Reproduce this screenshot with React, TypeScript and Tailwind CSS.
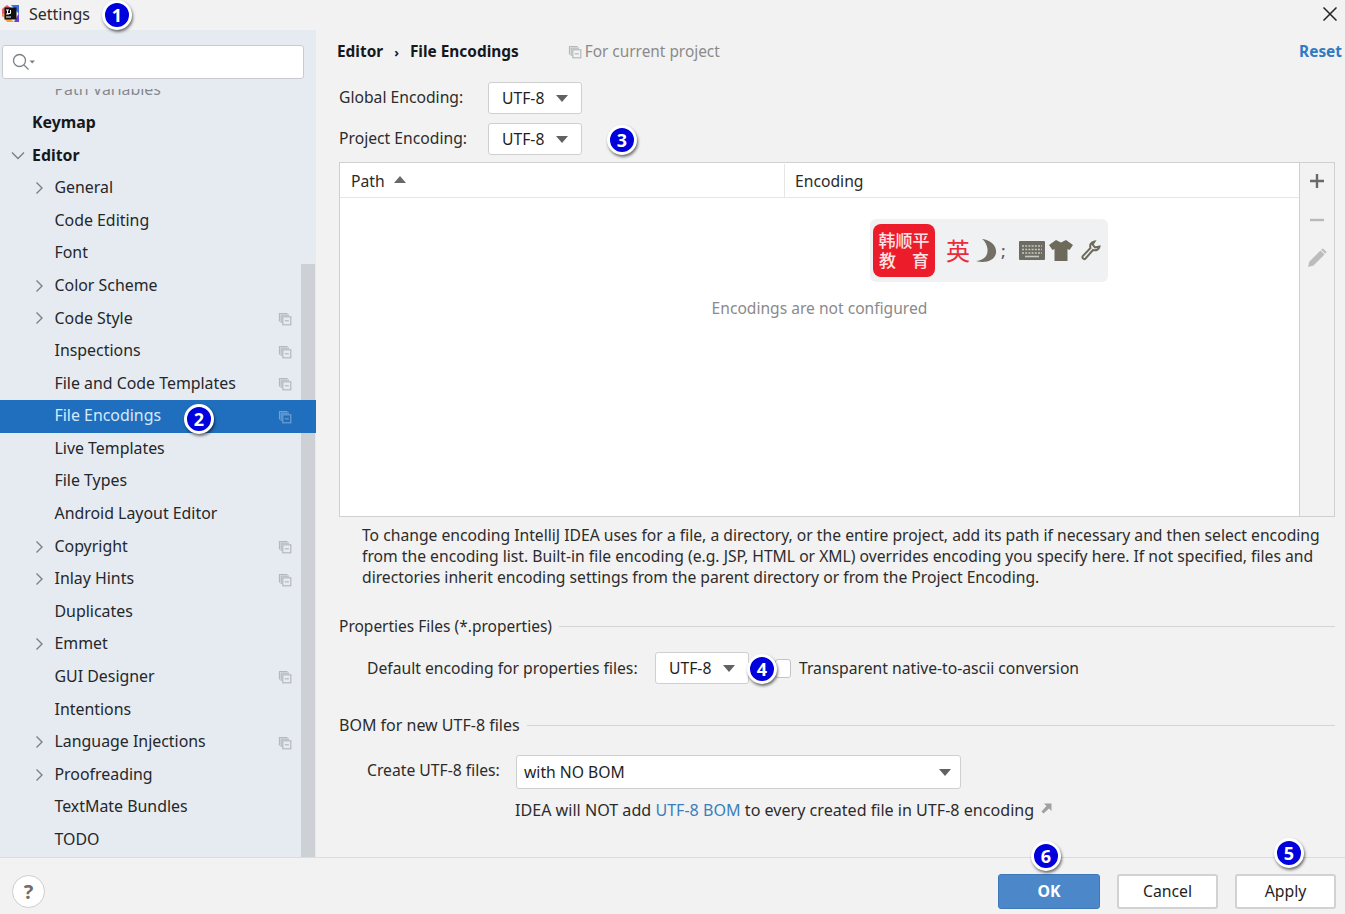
const font = { fontFamily: '"Noto Sans", "Noto Sans CJK SC", sans-serif' };

type Item = {
  label: string;
  level: 0 | 1;
  arrow?: 'right' | 'down';
  bold?: boolean;
  project?: boolean;
  selected?: boolean;
  faded?: boolean;
};

const items: Item[] = [
  { label: 'Path Variables', level: 1, faded: true },
  { label: 'Keymap', level: 0, bold: true },
  { label: 'Editor', level: 0, bold: true, arrow: 'down' },
  { label: 'General', level: 1, arrow: 'right' },
  { label: 'Code Editing', level: 1 },
  { label: 'Font', level: 1 },
  { label: 'Color Scheme', level: 1, arrow: 'right' },
  { label: 'Code Style', level: 1, arrow: 'right', project: true },
  { label: 'Inspections', level: 1, project: true },
  { label: 'File and Code Templates', level: 1, project: true },
  { label: 'File Encodings', level: 1, project: true, selected: true },
  { label: 'Live Templates', level: 1 },
  { label: 'File Types', level: 1 },
  { label: 'Android Layout Editor', level: 1 },
  { label: 'Copyright', level: 1, arrow: 'right', project: true },
  { label: 'Inlay Hints', level: 1, arrow: 'right', project: true },
  { label: 'Duplicates', level: 1 },
  { label: 'Emmet', level: 1, arrow: 'right' },
  { label: 'GUI Designer', level: 1, project: true },
  { label: 'Intentions', level: 1 },
  { label: 'Language Injections', level: 1, arrow: 'right', project: true },
  { label: 'Proofreading', level: 1, arrow: 'right' },
  { label: 'TextMate Bundles', level: 1 },
  { label: 'TODO', level: 1 },
];

function ProjectIcon({ color = '#b4b8bc' }: { color?: string }) {
  return (
    <svg width="14" height="14" viewBox="0 0 14 14" fill="none" stroke={color} strokeWidth="1.2">
      <path d="M9.5 1.5H1.5V9.5" />
      <path d="M11 3.2H3.2V11" />
      <rect x="4.8" y="4.8" width="8" height="8" />
      <path d="M6.8 8.8H10.8" />
    </svg>
  );
}

function Arrow({ dir }: { dir: 'right' | 'down' }) {
  return (
    <svg width="14" height="14" viewBox="0 0 14 14" fill="none" stroke="#7b8086" strokeWidth="1.4">
      {dir === 'right' ? <path d="M4.5 1.5L10 7L4.5 12.5" /> : <path d="M1 4.5L7 10.5L13 4.5" />}
    </svg>
  );
}

function Badge({ n, className }: { n: number; className: string }) {
  return (
    <div
      className={`absolute z-20 flex h-[30px] w-[30px] items-center justify-center rounded-full border-[3px] border-white bg-[#0000dc] text-[18px] font-bold leading-none text-white shadow-[1px_2px_3px_rgba(0,0,0,0.55)] ${className}`}
    >
      {n}
    </div>
  );
}

function Caret() {
  return <span className="h-0 w-0 border-x-[6.5px] border-t-[7px] border-x-transparent border-t-[#5f6265]" />;
}

function Combo({ value = 'UTF-8' }: { value?: string }) {
  return (
    <div className="flex h-[32px] w-[94px] items-center justify-between rounded-[3px] border border-[#cfcfcf] bg-white pl-[13px] pr-[13px] text-[#1f1f1f]">
      <span>{value}</span>
      <Caret />
    </div>
  );
}

function SectionTitle({ title, size }: { title: string; size: string }) {
  return (
    <div className="flex items-center gap-[7px]">
      <span className={`whitespace-nowrap text-[#2c2c2c] ${size}`}>{title}</span>
      <div className="h-px flex-1 bg-[#d4d4d4]" />
    </div>
  );
}

function Sidebar() {
  return (
    <aside className="relative flex h-full w-[316px] shrink-0 flex-col bg-[#e6ebf1] text-[15.9px]">
      <div className="h-[59px] shrink-0 pl-[2px] pt-[15px]">
        <div className="flex h-[34px] w-[302px] items-center rounded-[3px] border border-[#c8ccd0] bg-white pl-[9px]">
          <svg width="24" height="18" viewBox="0 0 24 18" fill="none" stroke="#7d8083" strokeWidth="1.3">
            <circle cx="7.5" cy="7.5" r="6" />
            <path d="M12 12L16.5 16.5" />
            <path d="M17.5 7.5H23L20.2 10.5Z" fill="#7d8083" stroke="none" />
          </svg>
        </div>
      </div>
      <div className="absolute bottom-0 right-px top-[234px] w-[14px] bg-[#cdd0d4]" />
      <div className="relative min-h-0 flex-1 overflow-hidden">
        <div className="-mt-[15px]">
          {items.map((item) => (
            <div
              key={item.label}
              className={`relative flex h-[32.6px] items-center pr-[24px] ${item.selected ? 'bg-[#1f6fbe] text-[#d7e8fa]' : 'text-[#24272b]'} ${item.faded ? 'opacity-50' : ''}`}
            >
              <div className={`flex shrink-0 justify-center ${item.level === 0 ? 'w-[32px] pl-[4px]' : 'w-[54.5px] pl-[24px]'}`}>
                {item.arrow && <Arrow dir={item.arrow} />}
              </div>
              <span className={item.bold ? 'font-bold text-[#15181c]' : ''}>{item.label}</span>
              {item.project && (
                <span className="ml-auto mt-[1px]">
                  <ProjectIcon color={item.selected ? '#6f9fd0' : '#b4b8bc'} />
                </span>
              )}
            </div>
          ))}
        </div>
      </div>
    </aside>
  );
}

function ImeBar() {
  return (
    <div className="ml-[530px] mt-[21px] flex h-[63px] w-[238px] items-center rounded-[6px] bg-[#f0f1f2] pl-[3px]">
      <div className="flex h-[53px] w-[62px] flex-col items-center justify-center rounded-[8px] bg-[#ec1c2b] text-[17px] font-medium leading-[20px] text-[#fde3e3]">
        <span>韩顺平</span>
        <span className="flex w-[50px] justify-between">
          <span>教</span>
          <span>育</span>
        </span>
      </div>
      <span className="ml-[11px] text-[24px] leading-none text-[#ec2b3a]">英</span>
      <svg className="ml-[4px]" width="24" height="26" viewBox="0 0 24 26">
        <path d="M8 1C17 2 23 8 22 15C21 22 12 26 2 23C10 22 14 18 13.500 11C13 7 11 3 8 1Z" fill="#736f62" />
      </svg>
      <span className="ml-[3px] text-[17px] font-medium leading-none text-[#5e5e5e]">;</span>
      <svg className="ml-[13px]" width="26" height="19" viewBox="0 0 26 19">
        <rect width="26" height="19" rx="1" fill="#6d6c62" />
        <path d="M3 5H23M3 8.500H23M3 12H23" stroke="#c8c8c0" strokeWidth="1.6" strokeDasharray="2 1.200" />
        <path d="M6 15.500H20" stroke="#c8c8c0" strokeWidth="1.600" />
      </svg>
      <svg className="ml-[4px]" width="24" height="21" viewBox="0 0 24 21">
        <path d="M7 0L12 2.500L17 0L24 5L20.500 10L18.500 9V21H5.500V9L3.500 10L0 5Z" fill="#6d6a5c" />
      </svg>
      <svg className="ml-[7px]" width="21" height="21" viewBox="0 0 21 21" fill="none" stroke="#6d6a5c" strokeWidth="2">
        <path d="M19.500 6.500C19 9.500 16 11 13 10L5.500 18.500C4 20 1.500 18 2.800 16L10.500 8C9.500 5 11 2 14.500 1.500L12.500 4.500L15 7.500Z" />
      </svg>
    </div>
  );
}

function Table() {
  return (
    <div className="flex h-[355px] border border-[#d0d0d0] bg-white">
      <div className="flex min-w-0 flex-1 flex-col">
        <div className="flex h-[35px] shrink-0 items-center border-b border-[#e6e6e6] pt-[1px] text-[#2a2a2a]">
          <div className="flex h-full w-[445px] items-center gap-[9px] border-r border-[#e6e6e6] pl-[11px]">
            <span>Path</span>
            <span className="mb-[2px] h-0 w-0 border-x-[6.5px] border-b-[7px] border-x-transparent border-b-[#67696b]" />
          </div>
          <div className="pl-[10px]">Encoding</div>
        </div>
        <ImeBar />
        <div className="mt-[14px] text-center text-[15.6px] text-[#8a8a8a]">Encodings are not configured</div>
      </div>
      <div className="flex w-[35px] shrink-0 flex-col items-center border-l border-[#d0d0d0] bg-[#f2f2f2] pt-[10px]">
        <svg width="16" height="16" viewBox="0 0 16 16" stroke="#6a6a6a" strokeWidth="2.4">
          <path d="M8 1V15M1 8H15" />
        </svg>
        <svg className="mt-[19px]" width="16" height="24" viewBox="0 0 16 24" stroke="#b9b9b9" strokeWidth="2.4">
          <path d="M1 12H15" />
        </svg>
        <svg className="mt-[16px]" width="20" height="20" viewBox="0 0 20 20" fill="#bcbcbc">
          <path d="M1 19L2.500 13.500L13.500 2.500L17.500 6.500L6.500 17.500Z" />
          <path d="M15 1L16 0.500L19.500 4L19 5L18.200 5.800L14.200 1.800Z" />
        </svg>
      </div>
    </div>
  );
}

function Content() {
  return (
    <main className="relative flex min-w-0 flex-1 flex-col pl-[23px] pr-[10px] text-[15.7px] leading-[24px]">
      <div className="flex h-[44px] items-center text-[15.4px]">
        <span className="-ml-[2px] font-bold text-[#15181c]">Editor</span>
        <span className="mx-[11px] text-[13px] font-bold text-[#15181c]">›</span>
        <span className="font-bold text-[#15181c]">File Encodings</span>
        <span className="ml-[49px] mr-[3px]">
          <ProjectIcon />
        </span>
        <span className="text-[#8a8a8a]">For current project</span>
        <span className="-mr-[7px] ml-auto font-bold text-[#2e7bc4]">Reset</span>
      </div>
      <div className="mt-[8px] flex items-center">
        <span className="w-[149px] pb-[2px] text-[#2c2c2c]">Global Encoding:</span>
        <Combo />
      </div>
      <div className="mt-[9px] flex items-center">
        <span className="w-[149px] pb-[2px] text-[#2c2c2c]">Project Encoding:</span>
        <Combo />
      </div>
      <div className="mt-[7px]">
        <Table />
      </div>
      <div className="ml-[23px] mt-[8px] w-[973px] leading-[21px] text-[#2c2c2c]">
        To change encoding IntelliJ IDEA uses for a file, a directory, or the entire project, add its path if necessary and then select encoding from the encoding list. Built-in file encoding (e.g. JSP, HTML or XML) overrides encoding you specify here. If not specified, files and directories inherit encoding settings from the parent directory or from the Project Encoding.
      </div>
      <div className="mt-[26px]">
        <SectionTitle title="Properties Files (*.properties)" size="text-[15.5px]" />
      </div>
      <div className="ml-[28px] mt-[14px] flex items-center text-[#2c2c2c]">
        <span className="w-[288px]">Default encoding for properties files:</span>
        <Combo />
        <span className="ml-[26px] h-[19px] w-[16px] rounded-[3px] border border-[#c4c4c4] bg-white" />
        <span className="ml-[8px]">Transparent native-to-ascii conversion</span>
      </div>
      <div className="mt-[29px]">
        <SectionTitle title="BOM for new UTF-8 files" size="text-[16px]" />
      </div>
      <div className="ml-[28px] mt-[18px] flex items-center text-[#2c2c2c]">
        <span className="w-[149px] pb-[4px]">Create UTF-8 files:</span>
        <div className="flex h-[34px] w-[445px] items-center justify-between rounded-[3px] border border-[#cfcfcf] bg-white pl-[7px] pr-[9px] text-[#1f1f1f]">
          <span>with NO BOM</span>
          <Caret />
        </div>
      </div>
      <div className="ml-[176px] mt-[9px] flex items-center text-[16.1px] text-[#2c2c2c]">
        <span>
          IDEA will NOT add <span className="text-[#3b7fbb]">UTF-8 BOM</span> to every created file in UTF-8 encoding
        </span>
        <svg className="mb-[3px] ml-[7px]" width="11" height="11" viewBox="0 0 11 11" fill="#a0a0a0">
          <path d="M3 0.500H10.500V8L8 5.500L2.500 10.500L0.500 8.500L5.500 3Z" />
        </svg>
      </div>
    </main>
  );
}

function Footer() {
  return (
    <footer className="flex h-[57px] shrink-0 items-start border-t border-[#dcdcdc] bg-[#f2f2f2] pl-[12px] pr-[9px] pt-[16px] text-[15.8px]">
      <div className="mt-[1px] flex h-[33px] w-[33px] items-center justify-center rounded-full border border-[#cdcdcd] bg-white text-[20px] font-bold leading-none text-[#6e6e6e]">
        ?
      </div>
      <div className="ml-auto flex h-[35px] w-[102px] items-center justify-center rounded-[3px] border border-[#3f78b8] bg-[#4c87c9] font-bold text-white">
        OK
      </div>
      <div className="ml-[17px] flex h-[35px] w-[101px] items-center justify-center rounded-[3px] border-2 border-[#d2d2d2] bg-white text-[#1f1f1f]">
        Cancel
      </div>
      <div className="ml-[17px] flex h-[35px] w-[101px] items-center justify-center rounded-[3px] border-2 border-[#d2d2d2] bg-white text-[#1f1f1f]">
        Apply
      </div>
    </footer>
  );
}

export default function App() {
  return (
    <div className="relative flex h-[914px] w-[1345px] flex-col overflow-hidden bg-[#f2f2f2] text-[16px]" style={font}>
      <header className="flex h-[30px] shrink-0 items-center pb-[3px]">
        <svg className="ml-[2px]" width="17" height="17" viewBox="0 0 17 17">
          <path d="M0 4L5 0L9 3L0 12Z" fill="#ef5a6f" />
          <path d="M9 0H17V9Z" fill="#3a6fe0" />
          <path d="M0 10L5 17H12L1 8Z" fill="#f2a03c" />
          <path d="M12 17H17V8Z" fill="#6a3fd8" />
          <rect x="2.500" y="2.500" width="12" height="12" fill="#111" />
          <path d="M4 5H7M5.500 5V9M4 9H7M8.500 5V8.500H6" stroke="#fff" strokeWidth="1" fill="none" />
          <path d="M4 12H9" stroke="#fff" strokeWidth="1" />
        </svg>
        <span className="ml-[10px] text-[#2c2c2c]">Settings</span>
        <svg className="ml-auto mr-[8px]" width="14" height="14" viewBox="0 0 14 14" stroke="#222" strokeWidth="1.5">
          <path d="M0.500 0.500L13.500 13.500M13.500 0.500L0.500 13.500" />
        </svg>
      </header>
      <div className="flex min-h-0 flex-1">
        <Sidebar />
        <Content />
      </div>
      <Footer />
      <Badge n={1} className="left-[102px] top-0" />
      <Badge n={2} className="left-[184px] top-[404px]" />
      <Badge n={3} className="left-[607px] top-[125px]" />
      <Badge n={4} className="left-[747px] top-[654px]" />
      <Badge n={5} className="left-[1274px] top-[838px]" />
      <Badge n={6} className="left-[1031px] top-[841px]" />
    </div>
  );
}
